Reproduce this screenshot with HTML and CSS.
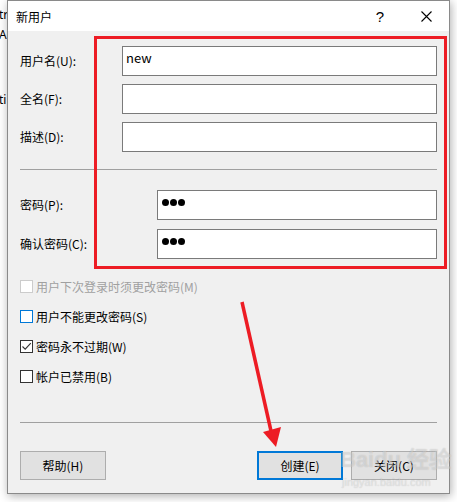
FILE: index.html
```html
<!DOCTYPE html>
<html lang="zh-CN">
<head>
  <meta charset="UTF-8" />
  <title>新用户</title>
  <link rel="stylesheet" href="styles.css">
</head>
<body>
  <div class="screen">
    <div class="behind">
      <div class="frag">tr</div>
      <div class="frag">Ac</div>
      <div class="frag frag-low">ti</div>
    </div>

    <div class="dialog">
      <div class="titlebar">
        <span class="title">新用户</span>
        <div class="caption-btns">
          <span class="cap cap-help">?</span>
          <span class="cap cap-close">
            <svg width="11" height="11" viewBox="0 0 11 11"><path d="M0.5 0.5 L10.5 10.5 M10.5 0.5 L0.5 10.5" stroke="#000" stroke-width="1.1" fill="none"/></svg>
          </span>
        </div>
      </div>

      <div class="content">
        <div class="rows">
          <div class="row"><span class="label">用户名(U):</span><div class="field">new</div></div>
          <div class="row"><span class="label">全名(F):</span><div class="field"></div></div>
          <div class="row"><span class="label">描述(D):</span><div class="field"></div></div>
        </div>

        <div class="sep"></div>

        <div class="rows rows-pw">
          <div class="row"><span class="label">密码(P):</span><div class="field"><span class="dots"><i></i><i></i><i></i></span></div></div>
          <div class="row"><span class="label">确认密码(C):</span><div class="field"><span class="dots"><i></i><i></i><i></i></span></div></div>
        </div>

        <div class="checks">
          <div class="check disabled"><span class="box"></span>用户下次登录时须更改密码(M)</div>
          <div class="check"><span class="box box-hover"></span>用户不能更改密码(S)</div>
          <div class="check"><span class="box"><svg width="11" height="11" viewBox="0 0 11 11"><path d="M1.5 5.5 L4.2 8.2 L9.8 2.2" stroke="#333" stroke-width="1.1" fill="none"/></svg></span>密码永不过期(W)</div>
          <div class="check"><span class="box"></span>帐户已禁用(B)</div>
        </div>

        <div class="sep sep-bottom"></div>

        <div class="buttons">
          <button class="btn btn-help">帮助(H)</button>
          <button class="btn btn-default">创建(E)</button>
          <button class="btn">关闭(C)</button>
        </div>
      </div>
    </div>

    <!-- annotations drawn over the screenshot -->
    <div class="annot-box"></div>
    <svg class="annot-arrow" width="457" height="502" viewBox="0 0 457 502">
      <line x1="242" y1="302" x2="271" y2="431" stroke="#ed1c24" stroke-width="3.5"/>
      <polygon points="263,432 281,427 276,447" fill="#ed1c24"/>
    </svg>

    <div class="watermark">
      <div class="wm-logo">Bai<span class="wm-paw">du</span> 经验</div>
      <div class="wm-url">jingyan.baidu.com</div>
    </div>
  </div>
</body>
</html>
```

FILE: styles.css
```css
body {
  margin: 0;
  background: #fff;
  font-family: "Noto Sans CJK SC", "Noto Sans", sans-serif;
  font-size: 12px;
  color: #000;
}

.screen {
  position: relative;
  display: flex;
  width: 457px;
  height: 502px;
  overflow: hidden;
  background: #fff;
}

.behind {
  flex: none;
  width: 7px;
  overflow: hidden;
  white-space: nowrap;
  font-family: "Noto Sans", sans-serif;
  font-size: 12px;
}

.frag {
  height: 20px;
  line-height: 20px;
  margin-left: -1px;
}

.frag:first-child {
  margin-top: 5px;
}

.frag-low {
  margin-top: 45px;
}

.dialog {
  flex: none;
  display: flex;
  flex-direction: column;
  width: 443px;
  height: 494px;
  box-sizing: border-box;
  border: 1px solid #8a8a8a;
  background: #f0f0f0;
  box-shadow: 1px 2px 9px rgba(0, 0, 0, 0.32);
}

.titlebar {
  display: flex;
  align-items: center;
  height: 30px;
  background: #fff;
}

.title {
  padding-left: 8px;
  line-height: 16px;
  margin-top: 1px;
}

.caption-btns {
  display: flex;
  margin-left: auto;
  height: 100%;
}

.cap {
  display: flex;
  align-items: center;
  justify-content: center;
  width: 46px;
  height: 100%;
}

.cap-help {
  font-family: "Liberation Sans", sans-serif;
  font-size: 15px;
  font-weight: normal;
  color: #000;
}

.content {
  display: flex;
  flex-direction: column;
  padding: 15px 12px 13px 12px;
}

.rows {
  display: flex;
  flex-direction: column;
  gap: 8px;
}

.rows-pw {
  margin-top: 20px;
  gap: 9px;
}

.row {
  display: flex;
  align-items: center;
  height: 30px;
}

.label {
  flex: none;
  width: 102px;
  line-height: 16px;
}

.rows-pw .label {
  width: 137px;
}

.field {
  flex: 1;
  height: 30px;
  box-sizing: border-box;
  border: 1px solid #7a7a7a;
  background: #fff;
  padding: 3px 3px;
  font-size: 13px;
  line-height: 16px;
}

.dots {
  display: flex;
  gap: 1px;
  margin-top: 5px;
  margin-left: 1px;
}

.dots i {
  width: 7px;
  height: 7px;
  border-radius: 50%;
  background: #000;
}

.sep {
  height: 1px;
  margin-top: 17px;
  background: #a0a0a0;
}

.sep-bottom {
  margin-top: 39px;
}

.checks {
  display: flex;
  flex-direction: column;
  gap: 17px;
  margin-top: 21px;
}

.check {
  display: flex;
  align-items: center;
  gap: 3px;
  height: 13px;
  line-height: 13px;
  white-space: nowrap;
}

.check.disabled {
  color: #a0a0a0;
}

.box {
  flex: none;
  display: flex;
  align-items: center;
  justify-content: center;
  width: 13px;
  height: 13px;
  box-sizing: border-box;
  border: 1px solid #333;
  background: #fff;
}

.disabled .box {
  border-color: #cccccc;
}

.box-hover {
  border-color: #0078d7;
}

.buttons {
  display: flex;
  gap: 8px;
  margin-top: 28px;
}

.btn {
  width: 86px;
  height: 29px;
  box-sizing: border-box;
  border: 1px solid #adadad;
  background: #e1e1e1;
  font-family: inherit;
  font-size: 12px;
  color: #000;
  padding: 0;
}

.btn-help {
  margin-right: auto;
}

.btn-default {
  border: 2px solid #0078d7;
}

.annot-box {
  position: absolute;
  left: 94px;
  top: 36px;
  width: 353px;
  height: 233px;
  box-sizing: border-box;
  border: 3px solid #ed1c24;
}

.annot-arrow {
  position: absolute;
  left: 0;
  top: 0;
}

.watermark {
  position: absolute;
  left: 340px;
  top: 444px;
  color: rgba(255, 255, 255, 0.4);
  text-shadow: 0 0 1px rgba(0, 0, 0, 0.2);
  font-family: "Liberation Sans", sans-serif;
  pointer-events: none;
}

.wm-logo {
  font-size: 22px;
  font-weight: bold;
  line-height: 32px;
}

.wm-url {
  font-size: 11px;
  line-height: 12px;
  margin-left: 2px;
}
```
